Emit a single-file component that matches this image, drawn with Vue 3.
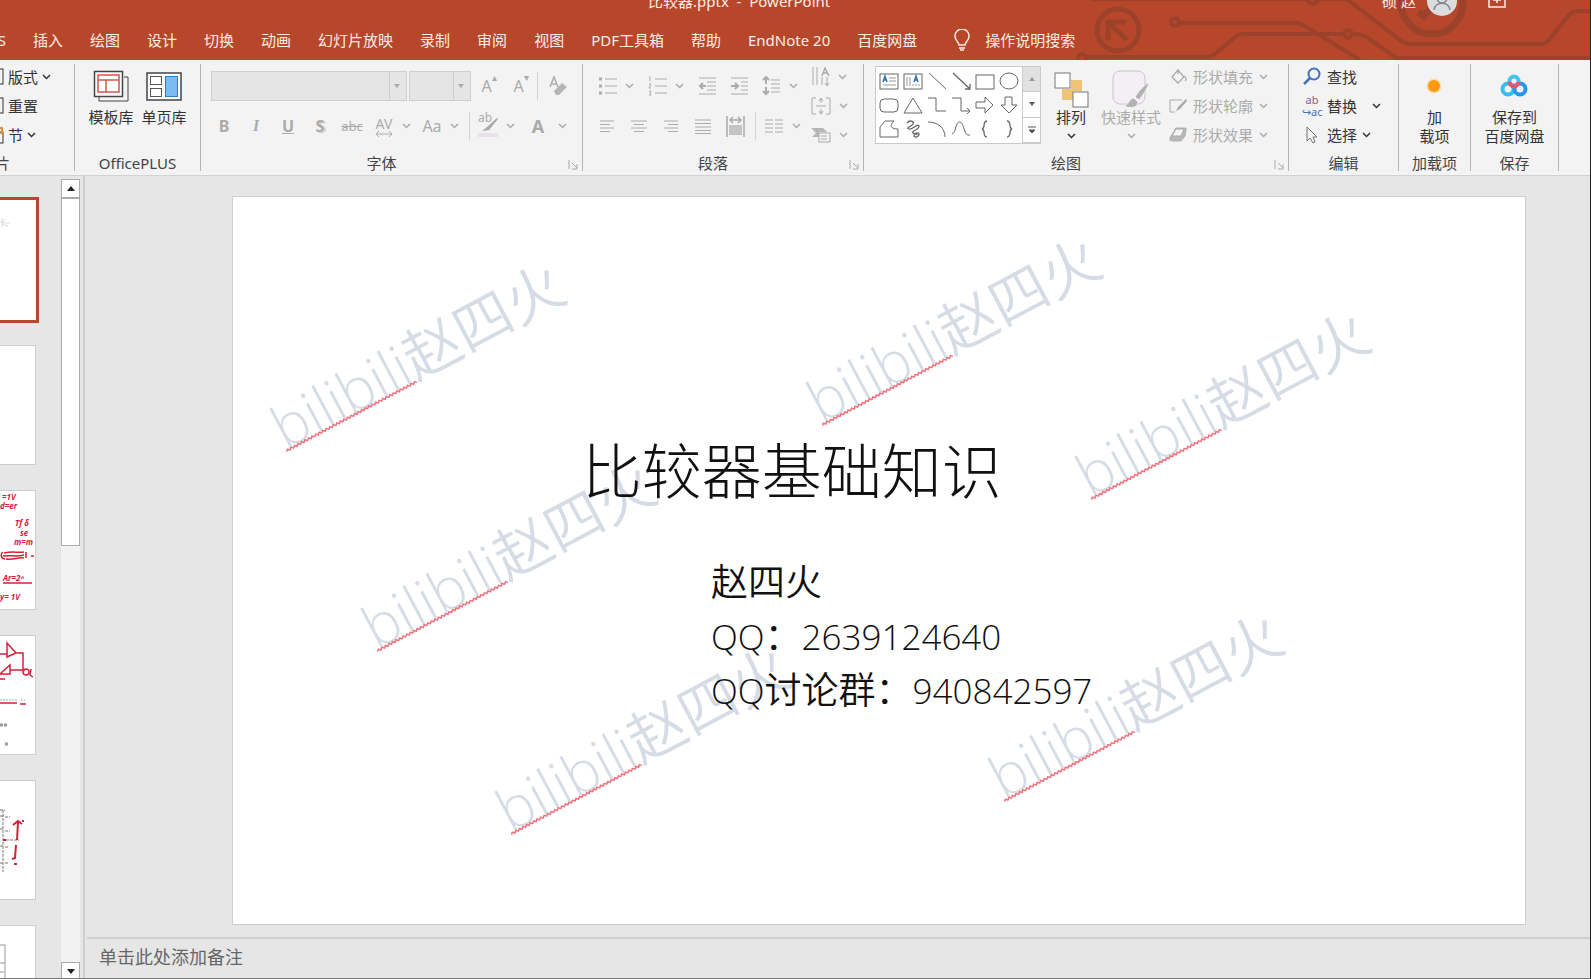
<script setup>
import { h } from 'vue'

const icons = {
  chev: [9, 6, '<path d="M1 1l3.5 3.5L8 1" stroke-width="1.5"/>'],
  launch: [10, 10, '<path d="M1 0v9M4 3l5 5M9 4v5H4"/>'],
  layout: [18, 18, '<rect x="1" y="1" width="16" height="15"/><path d="M4 5h10M4 8h10"/>'],
  section: [18, 18, '<rect x="1" y="6" width="16" height="11"/><path d="M1 2h15v5H1" stroke="#e0903a" stroke-width="2"/>'],
  templates: [36, 32, '<path d="M31 7h4v24H6v-4" stroke="#444"/><rect x="1.5" y="1.5" width="28" height="25" stroke="#444" fill="#fff" stroke-width="1.5"/><rect x="5" y="5" width="21" height="17" stroke="#d9534a" stroke-width="1.5"/><path d="M5 10h21M13 10v12" stroke="#d9534a" stroke-width="1.5"/>'],
  pages: [36, 29, '<rect x="1" y="1" width="34" height="27" stroke="#444" fill="#fff" stroke-width="1.5"/><rect x="4.500" y="4.500" width="11" height="8" stroke="#555"/><rect x="4.500" y="16.500" width="11" height="8" stroke="#555"/><rect x="19.500" y="4.500" width="12" height="20" fill="#7dbcf0" stroke="#2f7cc0"/>'],
  eraser: [18, 20, '<path d="M1 11L5 1l4 10M2.500 8h5" stroke-width="1.500"/><path d="M5 15l8-8 5 4-8 8H7z" fill="#b5b5b5" stroke="none"/>'],
  pen: [20, 22, '<path d="M19 3L9 12l-5 4 7-1 9-11z" fill="#a8a8a8" stroke="none"/><path d="M0 18h20v4H0z" fill="#e9e2ea" stroke="none"/>'],
  arrowsH: [18, 6, '<path d="M1 3h16M4 0L1 3l3 3M14 0l3 3-3 3"/>'],
  bullets: [19, 18, '<path d="M7 2h12M7 9h12M7 16h12"/><path d="M1 2h3M1 9h3M1 16h3" stroke-width="3"/>'],
  numbers: [19, 20, '<path d="M7 3h12M7 10h12M7 17h12"/><path d="M1 1h1v4M1 8h2l-2 4h2M1 15h2l-1 2 1 2H1"/>'],
  dedent: [19, 18, '<path d="M1 1h17M9 5h9M9 9h9M9 13h9M1 17h17"/><path d="M8 9H2M5 6L2 9l3 3" stroke-width="2"/>'],
  indent: [19, 18, '<path d="M1 1h17M11 5h7M11 9h7M11 13h7M1 17h17"/><path d="M1 9h6M5 6l3 3-3 3" stroke-width="2"/>'],
  spacing: [19, 20, '<path d="M9 4h9M9 8h9M9 12h9M9 16h9"/><path d="M4 1v7M1 4l3-3 3 3M4 11v7M1 15l3 3 3-3" stroke-width="2"/>'],
  left: [16, 13, '<path d="M1 1h14M1 4.500h10M1 8h14M1 11.500h10"/>'],
  center: [16, 13, '<path d="M0 1h16M3 4.500h10M0 8h16M3 11.500h10"/>'],
  right: [16, 13, '<path d="M1 1h14M5 4.500h10M1 8h14M5 11.500h10"/>'],
  justify: [18, 15, '<path d="M1 1h16M1 4.500h16M1 8h16M1 11.500h16M1 14.500h16"/>'],
  distribute: [19, 21, '<path d="M3 9h13v10H3z" fill="#c4c4c4" stroke="none"/><path d="M1 0v21M18 0v21M4 4h11M7 1L4 4l3 3M12 1l3 3-3 3" stroke-width="1.500"/>'],
  columns: [19, 15, '<path d="M1 1h8M1 5h8M1 9h8M1 13h8M11 1h8M11 5h8M11 9h8M11 13h8"/>'],
  textdir: [19, 20, '<path d="M2 0v18M6 0v18M11 10v8M16 10v8M14 16l2 3 2-3"/><path d="M11 9l3-8 4 8M12 6h5" stroke-width="1.500"/>'],
  valign: [20, 18, '<path d="M5 1H1v16h4M15 1h4v16h-4M5 9h10M10 1v5M10 12v5M8 4l2-3 2 3M8 14l2 3 2-3"/>'],
  smart: [20, 18, '<path d="M0 2h12l4 4H8v5H1l4-4z" fill="#b5b5b5" stroke="none"/><rect x="8" y="7" width="11" height="9" fill="#f3f3f3"/><path d="M10 10h6M10 13h6"/>'],
  arrange: [35, 36, '<path d="M17 8h11v11H17zM8 17h11v11H8z" fill="#efc478" stroke="none"/><rect x="1" y="1" width="15" height="15" fill="#fff" stroke="#777"/><rect x="19" y="20" width="15" height="15" fill="#fff" stroke="#777"/>'],
  quick: [38, 38, '<rect x="1" y="1" width="32" height="33" rx="7" fill="#f3eff4" stroke="#c9c4ca"/><path d="M37 12c-6 4-12 11-14 15l4 3c4-5 9-12 10-18zM22 28c-5 0-5 7-10 8 6 3 14 2 14-4z" fill="#b3b3b3" stroke="#f3f3f3"/>'],
  fill: [18, 17, '<path d="M3 9l6-7 6 7-6 6zM9 6V1M15 8c2 1 3 4 1 5" stroke-width="1.300"/>'],
  outline: [18, 16, '<path d="M13 2H1v12h5"/><path d="M17 1L9 9l-2 4 4-2 7-8z" fill="#aaa" stroke="none"/>'],
  effect: [18, 17, '<path d="M7 2h9q2 0 1 2l-1 6-4 5H3q-3 0-2-3z" fill="#b8b8b8" stroke="#b0b0b0"/><path d="M7 3h8l-3 7H3z" fill="#f3f3f3"/>'],
  find: [18, 19, '<circle cx="11" cy="7" r="5.500" stroke="#4472b8" stroke-width="2"/><path d="M7 11l-6 6" stroke="#4472b8" stroke-width="2.500"/>'],
  cursor: [12, 18, '<path d="M1 1v14l3-3 3 5 2-1-2-5h4z" stroke="#777"/>'],
  sun: [18, 18, '<circle cx="9" cy="9" r="7.500" fill="#fbdcae" stroke="none"/><circle cx="9" cy="9" r="6" fill="#fb9a0f" stroke="none"/>'],
  pan: [28, 24, '<circle cx="8" cy="15" r="5.500" stroke="#35bff0" stroke-width="4"/><circle cx="20" cy="15" r="5.500" stroke="#2596ea" stroke-width="4"/><circle cx="14" cy="7" r="4.500" stroke="#42c3ee" stroke-width="4"/><path d="M9.500 8a4.500 4.500 0 0 0 9 0" stroke="#f0546c" stroke-width="4"/>'],
  bulb: [16, 22, '<path d="M5 16c0-3-4-4-4-9a7 7 0 0 1 14 0c0 5-4 6-4 9zM5 19h6M6 21h4" stroke-width="1.500"/>'],
  ribbonmode: [18, 14, '<path d="M1 0v13h16V0M5 6h8M9 0v9" stroke-width="1.500"/>'],
  person: [30, 30, '<circle cx="15" cy="15" r="15" fill="#dcdcdc" stroke="none"/><circle cx="15" cy="12" r="5" stroke="#7d8791" stroke-width="1.500"/><path d="M7 24c1-9 15-9 16 0" stroke="#7d8791" stroke-width="1.500"/>'],
  up: [8, 5, '<path d="M0 5l4-5 4 5z" fill="#222" stroke="none"/>'],
  down: [8, 5, '<path d="M0 0l4 5 4-5z" fill="#222" stroke="none"/>'],
  tiny: [6, 4, '<path d="M0 0l3 4 3-4z" fill="currentColor" stroke="none"/>'],
  tinyup: [6, 4, '<path d="M0 4l3-4 3 4z" fill="currentColor" stroke="none"/>'],
  more: [8, 8, '<path d="M0 1h8M1 4l3 3 3-3z" fill="currentColor"/>'],
}

const shapes = [
  ['文本框', '<rect x="1" y="3" width="18" height="15"/><path d="M4 11l2-6 2 6M5 9h3" stroke="#2f75b5" stroke-width="1.500"/><path d="M10 7h7M10 10h7M4 14h13" stroke="#999"/>'],
  ['竖排文本框', '<rect x="1" y="3" width="18" height="15"/><path d="M11 11l2-6 2 6M12 9h3" stroke="#2f75b5" stroke-width="1.500"/><path d="M4 6v9M7 6v9M10 13v2M13 13v2M16 13v2" stroke="#999"/>'],
  ['直线', '<path d="M2 2l17 16"/>'],
  ['箭头', '<path d="M2 2l17 16M19 13v5h-5" stroke-width="1.300"/>'],
  ['矩形', '<rect x="1" y="4" width="18" height="14"/>'],
  ['椭圆', '<ellipse cx="10" cy="10" rx="9" ry="8"/>'],
  ['圆角矩形', '<rect x="1" y="4" width="18" height="13" rx="4"/>'],
  ['三角形', '<path d="M10 3l9 15H1z"/>'],
  ['肘形连接符', '<path d="M1 3h8v13h10"/>'],
  ['肘形箭头连接符', '<path d="M1 3h9v13h9M16 13l3 3-3 3"/>'],
  ['右箭头', '<path d="M1 7h9V2l8 8-8 8v-5H1z"/>'],
  ['下箭头', '<path d="M6 2h7v8h5l-8 8-8-8h4z"/>'],
  ['任意多边形', '<path d="M1 18V8l5-6h9c-5 5-3 8 4 8v8z"/>'],
  ['自由曲线', '<path d="M4 4c3-4 9-1 5 2S3 9 6 10s9-6 10-3-8 5-6 7 6-2 6 1-5 4-5 2 3-3 3-1" stroke-width="1.300"/>'],
  ['弧形', '<path d="M1 3c10 0 17 6 17 15"/>'],
  ['曲线', '<path d="M1 15C6 13 4 2 9 3s3 15 10 13"/>'],
  ['左大括号', '<path d="M12 2c-5 0-1 7-5 8 4 1 0 8 5 8" stroke-width="1.300"/>'],
  ['右大括号', '<path d="M8 2c5 0 1 7 5 8-4 1 0 8-5 8" stroke-width="1.300"/>'],
]

const Icon = ({ name }) => {
  const [w, ht, body] = icons[name]
  return h('svg', {
    class: 'icon', width: w, height: ht, viewBox: `0 0 ${w} ${ht}`,
    fill: 'none', stroke: 'currentColor', 'aria-hidden': 'true', innerHTML: body,
  })
}
Icon.props = ['name']

const tabs = ['插入', '绘图', '设计', '切换', '动画', '幻灯片放映', '录制', '审阅', '视图', 'PDF工具箱', '帮助', 'EndNote 20', '百度网盘']

const thumbs = [
  '<path d="M0 20l5 2M2 17v9M5 18l-3 5 6 2M5 22h5" stroke="#ddd"/>',
  '',
  '<g fill="#d5203a" font-size="8" font-style="italic" font-weight="bold"><text x="2" y="9">=1V</text><text x="0" y="18">d=er</text><text x="15" y="35">Tf δ</text><text x="20" y="45">se</text><text x="14" y="54">m=m</text><text x="3" y="90">Ar=2ⁿ</text><text x="0" y="109">y= 1V</text></g><path d="M3 92h29M4 62c8-2 14 0 20-1M3 65c6-1 15 1 21-1M6 68c8 1 12-2 18-1M3 61c-3 2-2 7 2 7M26 61v6M31 65h3" stroke="#d5203a" stroke-width="1.500"/>',
  '<path d="M0 18h7M7 7l9 10-9 4zM16 17h7v17M0 38l10-9v9zM10 34h15M0 43h5M31 33l-1 6 3 2M0 67h17M20 68h6" stroke="#d5203a" stroke-width="1.500"/><circle cx="26" cy="36" r="3" stroke="#d5203a" stroke-width="1.500"/><path d="M0 64h18M21 64h4" stroke="#aaa" stroke-dasharray="2 1"/><path d="M0 89h8M5 108h4" stroke="#999" stroke-width="3" stroke-dasharray="3 1"/>',
  '<path d="M3 29v62M0 29h5M0 35h3M0 48h3M0 65h3M0 82h3M5 36h5M5 50h5M5 66h4M5 82h4M6 59h13" stroke="#777" stroke-dasharray="3 1"/><path d="M17 59l1-18M13 44l5-4 4 3M23 39v2M16 64l-1 13-3 1M14 83h3M3 59h3" stroke="#d5203a" stroke-width="2"/>',
  '<path d="M0 19h5v40M0 37h5M0 46h4" stroke="#999"/>',
]

// anchor of each watermark, as a share of the slide
const marks = [
  [53, 254], [590, 228], [859, 303], [144, 455], [278, 638], [772, 605],
].map(([x, y]) => ({ left: (x / 1294) * 100 + '%', bottom: (1 - y / 728) * 100 + '%' }))

const squiggle = 'M0 3' + 'l2-2l2 2'.repeat(37)
</script>

<template>
  <div class="app">
    <header class="header">
      <svg class="circuit" width="520" height="60" viewBox="1071 0 520 60" fill="none" stroke="#9c412a" stroke-width="4" aria-hidden="true">
        <circle cx="1119" cy="30" r="21" stroke-width="5" />
        <path d="M1109 40V22h18M1110 23l18 17" stroke-width="5" />
        <path d="M1181 23h116q5 0 9 3l55 34" />
        <circle cx="1176" cy="22" r="4" />
        <circle cx="1349" cy="34" r="4" />
        <path d="M1344 34h-99q-6 0-10 4l-18 15q-4 4-10 4h-119" />
        <circle cx="1083" cy="58" r="4" />
        <path d="M1354 34q9 0 15 4l28 20h194" />
        <path d="M1092-1h218M1314-1h30q5 0 9 4l48 37q5 4 11 4h129q6 0 9-4l19-24q4-5 10-5h12" />
        <circle cx="1314" cy="-1" r="5" />
        <circle cx="1433" cy="3" r="31" stroke-width="7" />
        <path d="M1419 12l6 4 14-16" stroke-width="7" />
      </svg>
      <div class="titlebar">
        <span>比较器.pptx&nbsp; -&nbsp; PowerPoint</span>
        <div class="account">
          <span>硕 赵</span>
          <button aria-label="账户"><Icon name="person" /></button>
          <button class="mode" aria-label="功能区显示选项"><Icon name="ribbonmode" /></button>
        </div>
      </div>
      <nav class="tabs">
        <button class="cut">S</button>
        <button v-for="t in tabs" :key="t">{{ t }}</button>
        <button class="tell"><Icon name="bulb" />操作说明搜索</button>
      </nav>
    </header>

    <section class="ribbon">
      <div class="group g-slides">
        <div class="stack">
          <button><Icon name="layout" />版式<Icon name="chev" /></button>
          <button><Icon name="layout" />重置</button>
          <button><Icon name="section" />节<Icon name="chev" /></button>
        </div>
        <div class="label">片</div>
      </div>

      <div class="group g-plus">
        <div class="body bigs">
          <button class="big"><span class="pic"><Icon name="templates" /></span>模板库</button>
          <button class="big"><span class="pic"><Icon name="pages" /></span>单页库</button>
        </div>
        <div class="label">OfficePLUS</div>
      </div>

      <div class="group g-font dim">
        <div class="body lines">
          <div class="line">
            <button class="combo wide" aria-label="字体"><Icon name="tiny" /></button>
            <button class="combo" aria-label="字号"><Icon name="tiny" /></button>
            <button class="cell size">A<sup>▴</sup></button>
            <button class="cell size">A<sup>▾</sup></button>
            <i class="bar"></i>
            <button class="cell" aria-label="清除格式"><Icon name="eraser" /></button>
          </div>
          <div class="line">
            <button class="cell"><b>B</b></button>
            <button class="cell serif"><b><i>I</i></b></button>
            <button class="cell"><b><u>U</u></b></button>
            <button class="cell"><b class="shadow">S</b></button>
            <button class="cell small"><s>abc</s></button>
            <button class="cell av">AV<Icon name="arrowsH" /></button>
            <button class="drop" aria-label="字符间距"><Icon name="chev" /></button>
            <button class="cell">Aa</button>
            <button class="drop" aria-label="更改大小写"><Icon name="chev" /></button>
            <i class="bar"></i>
            <button class="cell hl"><span>ab</span><Icon name="pen" /></button>
            <button class="drop" aria-label="突出显示颜色"><Icon name="chev" /></button>
            <button class="cell color"><b>A</b></button>
            <button class="drop" aria-label="字体颜色"><Icon name="chev" /></button>
          </div>
        </div>
        <div class="label wide-label">字体<Icon class="launch" name="launch" /></div>
      </div>

      <div class="group g-para dim">
        <div class="body para">
          <div class="lines">
            <div class="line">
              <button class="cell" aria-label="项目符号"><Icon name="bullets" /></button>
              <button class="drop" aria-label="项目符号选项"><Icon name="chev" /></button>
              <button class="cell" aria-label="编号"><Icon name="numbers" /></button>
              <button class="drop" aria-label="编号选项"><Icon name="chev" /></button>
              <button class="cell" aria-label="减少缩进"><Icon name="dedent" /></button>
              <button class="cell" aria-label="增加缩进"><Icon name="indent" /></button>
              <button class="cell" aria-label="行距"><Icon name="spacing" /></button>
              <button class="drop near" aria-label="行距选项"><Icon name="chev" /></button>
            </div>
            <div class="line">
              <button class="cell" aria-label="左对齐"><Icon name="left" /></button>
              <button class="cell" aria-label="居中"><Icon name="center" /></button>
              <button class="cell" aria-label="右对齐"><Icon name="right" /></button>
              <button class="cell" aria-label="两端对齐"><Icon name="justify" /></button>
              <button class="cell" aria-label="分散对齐"><Icon name="distribute" /></button>
              <i class="bar"></i>
              <button class="cell cols" aria-label="分栏"><Icon name="columns" /></button>
              <button class="drop near" aria-label="分栏选项"><Icon name="chev" /></button>
            </div>
          </div>
          <div class="stack">
            <button aria-label="文字方向"><Icon name="textdir" /><Icon name="chev" /></button>
            <button aria-label="对齐文本"><Icon name="valign" /><Icon name="chev" /></button>
            <button aria-label="转换为 SmartArt"><Icon name="smart" /><Icon name="chev" /></button>
          </div>
        </div>
        <div class="label wide-label">段落<Icon class="launch" name="launch" /></div>
      </div>

      <div class="group g-draw">
        <div class="body draw">
          <div class="gallery">
            <div class="shapes">
              <button v-for="s in shapes" :key="s[0]" :aria-label="s[0]">
                <svg width="20" height="20" viewBox="0 0 20 20" fill="none" stroke="#666" v-html="s[1]"></svg>
              </button>
            </div>
            <div class="spin">
              <button class="off" aria-label="上一行"><Icon name="tinyup" /></button>
              <button aria-label="下一行"><Icon name="tiny" /></button>
              <button aria-label="其他"><Icon name="more" /></button>
            </div>
          </div>
          <button class="big arrange"><span class="pic"><Icon name="arrange" /></span>排列<Icon name="chev" /></button>
          <button class="big dim"><span class="pic"><Icon name="quick" /></span>快速样式<Icon name="chev" /></button>
          <div class="stack dim">
            <button><Icon name="fill" />形状填充<Icon name="chev" /></button>
            <button><Icon name="outline" />形状轮廓<Icon name="chev" /></button>
            <button><Icon name="effect" />形状效果<Icon name="chev" /></button>
          </div>
        </div>
        <div class="label wide-label">绘图<Icon class="launch" name="launch" /></div>
      </div>

      <div class="group g-edit">
        <div class="stack">
          <button><span class="ic"><Icon name="find" /></span>查找</button>
          <button><span class="ic repl"><em>ab</em><small>↪ac</small></span>替换<Icon class="far" name="chev" /></button>
          <button><span class="ic"><Icon name="cursor" /></span>选择<Icon name="chev" /></button>
        </div>
        <div class="label">编辑</div>
      </div>

      <div class="group g-addin">
        <div class="body bigs">
          <button class="big"><span class="pic"><Icon name="sun" /></span>加<br />载项</button>
        </div>
        <div class="label">加载项</div>
      </div>

      <div class="group g-save">
        <div class="body bigs">
          <button class="big"><span class="pic"><Icon name="pan" /></span>保存到<br />百度网盘</button>
        </div>
        <div class="label">保存</div>
      </div>
    </section>

    <main class="work">
      <aside class="side">
        <div class="thumbs">
          <button v-for="(t, i) in thumbs" :key="i" :class="{ on: i === 0 }" :aria-label="'幻灯片 ' + (i + 1)">
            <svg width="34" height="118" viewBox="0 0 34 118" fill="none" v-html="t"></svg>
          </button>
        </div>
        <div class="scroll">
          <button aria-label="向上滚动"><Icon name="up" /></button>
          <div class="thumb"></div>
          <div class="rest"></div>
          <button aria-label="向下滚动"><Icon name="down" /></button>
        </div>
      </aside>

      <div class="stage">
        <div class="canvas">
          <article class="slide">
            <div v-for="(m, i) in marks" :key="i" class="mark" :style="m">
              <span>bilibili<svg class="wave" height="4" fill="none" stroke="#f2717c" stroke-width="1.500" aria-hidden="true"><path :d="squiggle" /></svg></span>赵四火
            </div>
            <h1>比较器基础知识</h1>
            <p>赵四火<br /><span>QQ</span>：<span>2639124640</span><br /><span>QQ</span>讨论群：<span>940842597</span></p>
          </article>
        </div>
        <textarea class="notes" rows="1" aria-label="备注" placeholder="单击此处添加备注"></textarea>
      </div>
    </main>
  </div>
</template>

<style>
body {
  margin: 0;
}
</style>

<style scoped>
.app {
  display: flex;
  flex-direction: column;
  box-sizing: border-box;
  height: 100vh;
  overflow: hidden;
  border-right: 1px solid #222;
  border-bottom: 1px solid #777;
  background: #e6e6e6;
  color: #333;
  font: 15px/20px "Noto Sans", "Noto Sans CJK SC", sans-serif;
}
button {
  display: flex;
  align-items: center;
  justify-content: center;
  padding: 0;
  border: 0;
  background: none;
  color: inherit;
  font: inherit;
  white-space: nowrap;
}
.icon {
  flex: none;
}

/* header */
.header {
  position: relative;
  flex: none;
  height: 60px;
  overflow: hidden;
  background: #b7472a;
  color: #fdece6;
}
.circuit {
  position: absolute;
  top: 0;
  right: 0;
}
.titlebar {
  position: relative;
  display: flex;
  align-items: center;
  justify-content: space-between;
  height: 44px;
  margin-top: -21px;
  padding: 0 84px 0 648px;
}
.account {
  display: flex;
  align-items: center;
  gap: 11px;
}
.mode {
  margin-left: 20px;
}
.tabs {
  position: relative;
  display: flex;
  align-items: center;
  gap: 27px;
  height: 33px;
}
.cut {
  width: 6px;
  justify-content: flex-end;
}
.tell {
  gap: 15px;
  margin-left: 10px;
}

/* ribbon */
.ribbon {
  display: flex;
  flex: none;
  height: 116px;
  box-sizing: border-box;
  padding: 4px 0;
  border-bottom: 1px solid #d2d2d2;
  background: #f3f3f3;
}
.group {
  display: flex;
  flex: none;
  flex-direction: column;
  justify-content: space-between;
  box-sizing: border-box;
  border-right: 1px solid #b4b4b4;
}
.g-slides { width: 75px; }
.g-plus { width: 126px; }
.g-font { width: 382px; }
.g-para { width: 281px; }
.g-draw { width: 425px; }
.g-edit { width: 110px; }
.g-addin { width: 72px; }
.g-save { width: 88px; }
.label {
  position: relative;
  height: 16px;
  color: #444;
  line-height: 16px;
  text-align: center;
}
.wide-label {
  padding-right: 20px;
}
.launch {
  position: absolute;
  right: 4px;
  bottom: 1px;
  color: #aaa;
}
.dim {
  color: #ababab;
}
.stack {
  display: grid;
  grid-template-rows: repeat(3, 29px);
  margin-top: -2px;
}
.stack button {
  justify-content: flex-start;
  gap: 8px;
}
.g-slides .stack {
  margin-left: -14px;
}
.g-slides button {
  gap: 4px;
}
.g-slides .label {
  width: 10px;
  direction: rtl;
}
.bigs {
  display: flex;
  justify-content: center;
  gap: 8px;
}
.big {
  flex-direction: column;
  justify-content: flex-start;
  line-height: 19px;
}
.pic {
  display: flex;
  align-items: center;
  justify-content: center;
  height: 44px;
}
.big .icon:last-child {
  margin-top: 6px;
}
.pic .icon:last-child {
  margin-top: 0;
}

.line {
  display: flex;
  align-items: center;
  height: 40px;
}
.lines {
  padding-top: 2px;
}
.cell {
  width: 32px;
  height: 30px;
  font-size: 16px;
}
.drop {
  width: 12px;
  height: 30px;
  margin-right: 4px;
}
.bar {
  width: 1px;
  height: 28px;
  background: #d4d4d4;
}
.combo {
  justify-content: flex-end;
  width: 62px;
  height: 30px;
  margin-right: 2px;
  padding-right: 6px;
  box-sizing: border-box;
  border: 1px solid #cfcfcf;
  background: linear-gradient(#cfcfcf, #cfcfcf) right 16px top / 1px 100% no-repeat #e5e5e5;
}
.combo.wide {
  width: 196px;
}
.g-font .lines {
  padding-left: 7px;
}
.g-font .line:first-child {
  padding-left: 3px;
}
.size sup {
  align-self: flex-start;
  font-size: 10px;
  line-height: 12px;
}
.line:first-child .bar {
  margin-right: 4px;
}
.serif {
  font-family: "Liberation Serif", serif;
}
.shadow {
  text-shadow: 2px 1px 1px #ccc;
}
.small {
  font-size: 13px;
}
.av {
  flex-direction: column;
  font-size: 14px;
  line-height: 15px;
}
.hl {
  position: relative;
  margin-left: 2px;
}
.hl span {
  position: absolute;
  top: 0;
  left: 6px;
  font-size: 12px;
  line-height: 14px;
}
.g-font .line:last-child .bar {
  margin-left: 5px;
}
.color {
  margin-left: 2px;
  font-size: 18px;
}
.color + .drop {
  margin-left: 2px;
}

.para {
  display: flex;
}
.para .lines {
  width: 220px;
  padding-left: 8px;
}
.para .drop {
  margin-right: 6px;
}
.para .bar {
  margin-left: 4px;
}
.cols {
  width: 34px;
}
.para .drop.near {
  margin: 0;
}

.draw {
  display: flex;
  padding-left: 11px;
}
.gallery {
  display: flex;
  width: 166px;
  height: 78px;
  margin-top: 2px;
  box-sizing: border-box;
  border: 1px solid #cacaca;
  background: #fff;
}
.shapes {
  display: grid;
  flex: 1;
  grid-template-columns: repeat(6, 1fr);
  grid-template-rows: repeat(3, 24px);
  padding: 2px 1px;
}
.spin {
  display: grid;
  width: 18px;
  grid-template-rows: repeat(3, 1fr);
}
.spin button {
  border: 1px solid #cacaca;
  border-width: 0 0 1px 1px;
  color: #555;
}
.spin .off {
  background: #e1e1e1;
  color: #999;
}
.draw .big {
  width: 60px;
}
.draw .pic {
  align-items: flex-end;
}
.draw .stack {
  margin-left: 8px;
}
.draw .stack button {
  gap: 6px;
}

.g-edit .stack {
  padding-left: 13px;
}
.g-edit .stack button {
  gap: 5px;
}
.ic {
  display: flex;
  justify-content: center;
  width: 20px;
}
.repl {
  flex-direction: column;
  font-size: 11px;
  line-height: 12px;
}
.repl em {
  color: #8d55a5;
  font-style: normal;
}
.repl small {
  color: #3f76b5;
  font-size: 11px;
}
.far {
  margin-left: 10px;
}

/* work area */
.work {
  display: flex;
  flex: 1;
  min-height: 0;
}
.side {
  display: flex;
  flex: none;
  width: 83px;
  border-right: 2px solid #cfcfcf;
}
.thumbs {
  display: flex;
  flex: none;
  flex-direction: column;
  gap: 25px;
  width: 61px;
  padding-top: 24px;
  box-sizing: border-box;
  overflow: hidden;
}
.thumbs button {
  flex: none;
  justify-content: flex-start;
  width: 36px;
  height: 120px;
  box-sizing: border-box;
  border: 1px solid #cdcdcd;
  border-left: 0;
  background: #fff;
}
.thumbs .on {
  border-color: #fff;
  outline: 3px solid #b7472a;
}
.scroll {
  display: flex;
  flex-direction: column;
  width: 19px;
  margin-bottom: -3px;
  padding-top: 3px;
}
.scroll button,
.thumb {
  flex: none;
  box-sizing: border-box;
  height: 19px;
  border: 1px solid #ababab;
  background: #fff;
}
.thumb {
  flex: 45 0 0;
}
.rest {
  flex: 54 0 0;
  background: #f2f2f2;
}
.stage {
  display: flex;
  flex: 1;
  flex-direction: column;
  min-width: 0;
}
.canvas {
  flex: 1;
  min-height: 0;
  padding: 20px 64px 0 147px;
}
.slide {
  position: relative;
  aspect-ratio: 16 / 9;
  border: 1px solid #cfcfcf;
  background: #fff;
  color: #111;
}
.slide h1 {
  position: absolute;
  top: 31%;
  left: 27%;
  margin: 0;
  font-size: 60px;
  font-weight: 300;
  line-height: 98px;
}
.slide p {
  position: absolute;
  top: 49%;
  left: 37%;
  margin: 0;
  font: 350 37px/54px "Noto Sans CJK SC", sans-serif;
}
.slide p span {
  font: 350 35px/1px "Open Sans", sans-serif;
}
.mark {
  position: absolute;
  color: #d6dce5;
  font: 350 58px/46px "Open Sans", "Noto Sans CJK SC", sans-serif;
  transform: rotate(-28deg);
  transform-origin: 0 100%;
  white-space: nowrap;
}
.mark span {
  position: relative;
}
.wave {
  position: absolute;
  left: 0;
  bottom: 14px;
  width: 100%;
}
.notes {
  flex: none;
  height: 41px;
  margin-left: 2px;
  padding: 5px 12px;
  box-sizing: border-box;
  border: 0;
  border-top: 2px solid #cfcfcf;
  background: none;
  font: 18px/24px "Noto Sans CJK SC", sans-serif;
  resize: none;
}
.notes::placeholder {
  color: #666;
}
</style>
